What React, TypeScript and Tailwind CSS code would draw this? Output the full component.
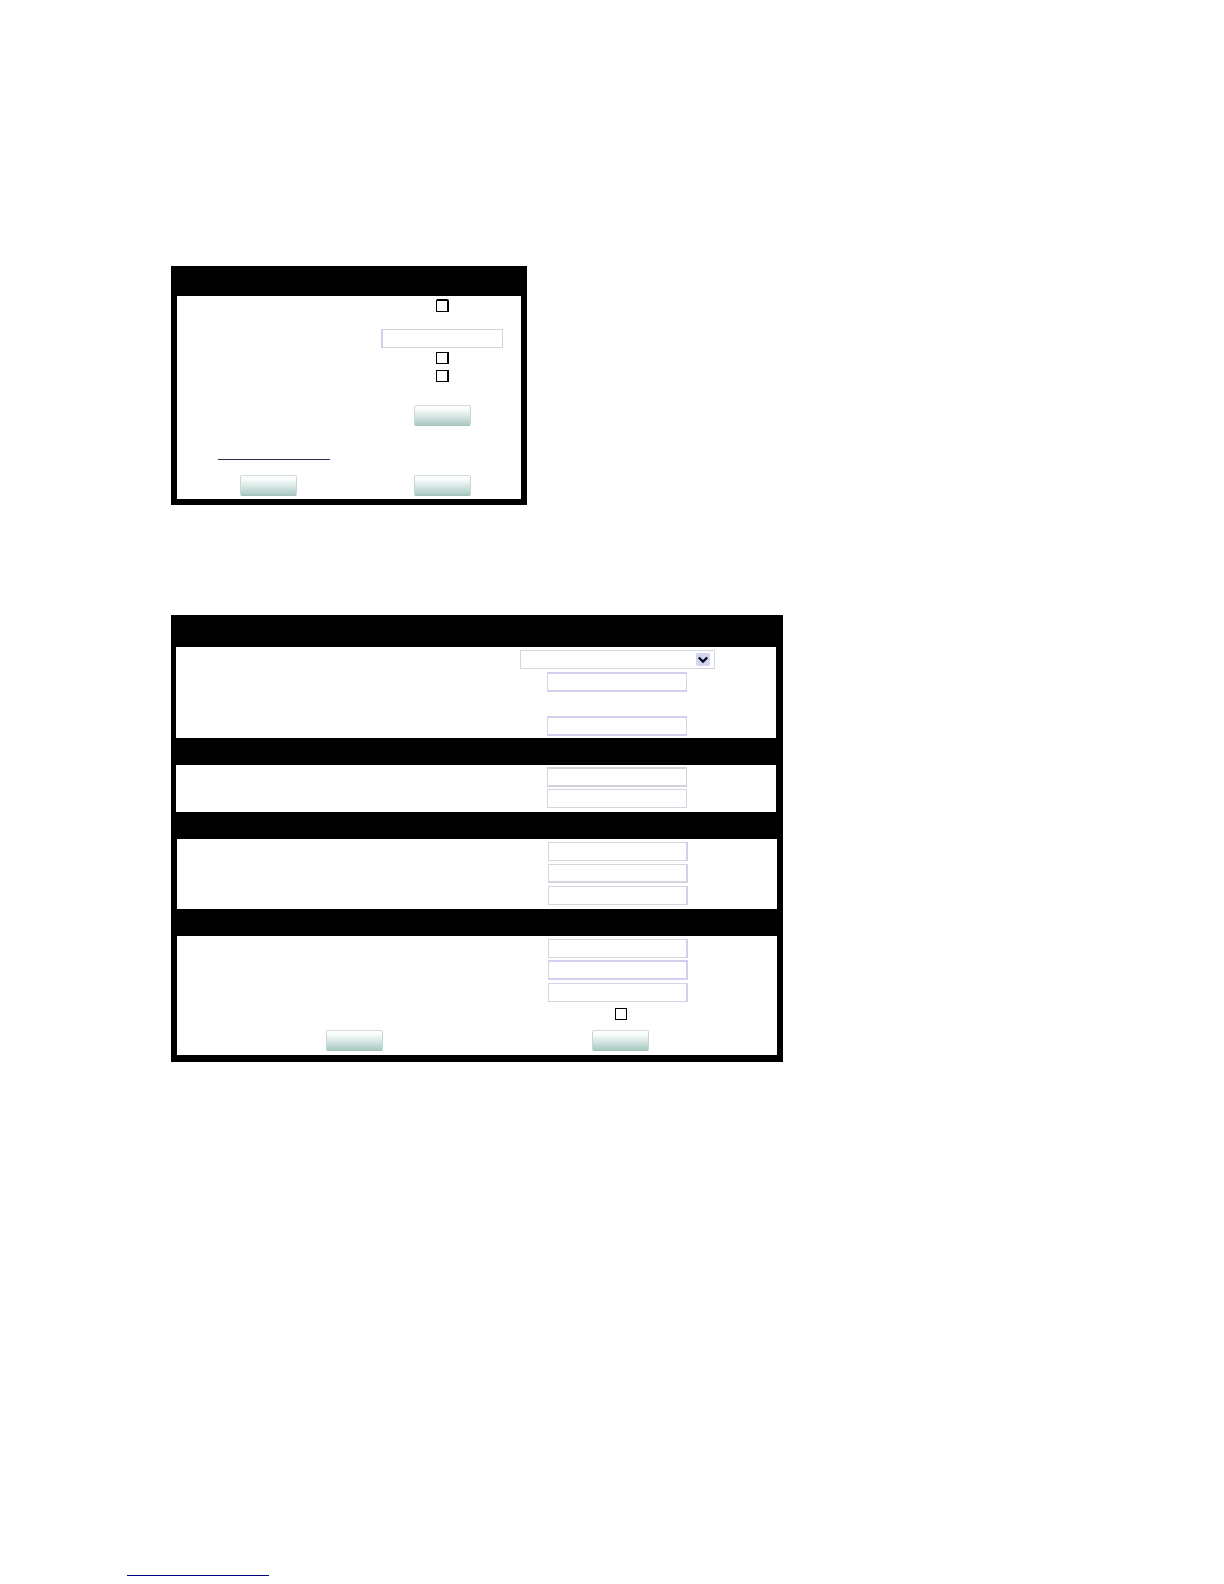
import type { ReactNode } from "react";

function Row({ left, children, className = "", cols = "grid-cols-[282fr_318fr]" }: {
  left?: ReactNode;
  children?: ReactNode;
  className?: string;
  cols?: string;
}) {
  return (
    <div className={`grid ${cols} ${className}`}>
      <div className="flex justify-center">{left}</div>
      <div className="flex justify-center">{children}</div>
    </div>
  );
}

function TextField({ label, className = "h-[19px] border-[#d2d5e0]" }: { label: string; className?: string }) {
  return (
    <input
      type="text"
      aria-label={label}
      className={`w-[140px] border bg-white px-1 font-['Liberation_Sans'] text-xs outline-none ${className}`}
    />
  );
}

function CheckBox({ label, className = "size-3" }: { label: string; className?: string }) {
  return (
    <input
      type="checkbox"
      aria-label={label}
      className={`appearance-none border border-black bg-white checked:bg-black ${className}`}
    />
  );
}

function ActionButton({ label }: { label: string }) {
  return (
    <button
      type="button"
      aria-label={label}
      className="h-[21px] w-[57px] rounded-xs border border-t-[#d3dcda] border-x-[#c6d8d4] border-b-[#a5bfba] bg-linear-to-b from-[#fbfefd] from-15% via-[#dce9e7] via-50% to-[#a9cac4]"
    />
  );
}

const settingsCols = "grid-cols-[182fr_158fr] gap-1";
const thick = "h-5 border-y-2 border-y-[#d0cfec] border-x-[#d2d5e0]";
const rightEdge = "h-[19px] border-[#d2d5e0] border-r-2 border-r-[#d2d0ee]";

export default function App() {
  return (
    <main className="flex min-h-screen flex-col bg-white font-['Liberation_Sans',sans-serif]">
      <form className="mt-[266px] ml-[171px] w-full max-w-[356px] bg-black px-1.5 pt-[30px] pb-1.5">
        <div className="bg-white pt-[3px] pb-[3px]">
          <Row cols={settingsCols}>
            <CheckBox label="Enable" className="size-[13px] rounded-t-xs border-t-2 border-r-2" />
          </Row>
          <Row cols={settingsCols} className="mt-[17px]">
            <input
              type="text"
              aria-label="Name"
              className="h-[19px] w-[122px] border border-[#d2d3e0] border-l-2 border-l-[#d0cfec] bg-white px-1 text-xs outline-none"
            />
          </Row>
          <Row cols={settingsCols} className="mt-1">
            <CheckBox label="Option one" className="h-3 w-[13px] border-r-2" />
          </Row>
          <Row cols={settingsCols} className="mt-1.5">
            <CheckBox label="Option two" className="h-3 w-[13px] border-r-2" />
          </Row>
          <Row cols={settingsCols} className="mt-[23px]">
            <ActionButton label="Select" />
          </Row>
          <a href="#more" aria-label="More settings" className="mt-[18px] ml-[41px] block h-4 w-28 border-b border-[#29294f]" />
          <Row cols={settingsCols} className="mt-[15px]" left={<ActionButton label="Apply" />}>
            <ActionButton label="Cancel" />
          </Row>
        </div>
      </form>

      <form className="mt-[110px] ml-[171px] flex w-full max-w-[612px] flex-col gap-[27px] bg-black pt-8 pb-[7px]">
        <section className="mr-[7px] ml-[5px] bg-white pt-[3px] pb-0.5">
          <Row>
            <div className="relative">
              <select
                aria-label="Type"
                className="block h-[19px] w-[195px] appearance-none border border-[#d2d8e0] bg-white px-1 text-xs outline-none"
              />
              <span className="pointer-events-none absolute top-[3px] right-[5px] flex h-[13px] w-3.5 items-center justify-center rounded-xs bg-[#d3d4f0]">
                <svg viewBox="0 0 14 13" className="h-[13px] w-3.5" aria-hidden="true">
                  <path d="M2.8 4.5 L7 8.5 L11.2 4.5" fill="none" stroke="#080818" strokeWidth="2.4" />
                </svg>
              </span>
            </div>
          </Row>
          <Row className="mt-[3px]">
            <TextField label="General value 1" className={thick} />
          </Row>
          <Row className="mt-6">
            <TextField label="General value 2" className={thick} />
          </Row>
        </section>

        <section className="mr-[7px] ml-[5px] bg-white pt-0.5 pb-1">
          <Row>
            <TextField label="Second group value 1" className="h-5 border-y-2 border-[#d3d4d9]" />
          </Row>
          <Row className="mt-0.5">
            <TextField label="Second group value 2" />
          </Row>
        </section>

        <section className="mx-1.5 flex flex-col gap-[3px] bg-white pt-[3px] pb-1">
          <Row>
            <TextField label="Third group value 1" className={rightEdge} />
          </Row>
          <Row>
            <TextField label="Third group value 2" className={`${rightEdge} border-b-2`} />
          </Row>
          <Row>
            <TextField label="Third group value 3" className={rightEdge} />
          </Row>
        </section>

        <section className="mx-1.5 bg-white pt-[3px] pb-1">
          <Row>
            <TextField label="Fourth group value 1" className={rightEdge} />
          </Row>
          <Row className="mt-0.5">
            <TextField label="Fourth group value 2" className="h-5 border-y-2 border-r-2 border-[#d1cfed] border-l-[#d2d5e0]" />
          </Row>
          <Row className="mt-[3px]">
            <TextField label="Fourth group value 3" className={rightEdge} />
          </Row>
          <Row cols="grid-cols-[288fr_312fr]" className="mt-1.5">
            <CheckBox label="Fourth group option" />
          </Row>
          <Row cols="grid-cols-[206fr_314fr]" className="mt-2.5 gap-1.5 pl-[74px]" left={<ActionButton label="Apply" />}>
            <ActionButton label="Cancel" />
          </Row>
        </section>
      </form>

      <footer className="mt-auto ml-[127px] pb-2">
        <a href="#contents" aria-label="Contents" className="block h-4 w-[142px] border-b border-[#000080]" />
      </footer>
    </main>
  );
}
